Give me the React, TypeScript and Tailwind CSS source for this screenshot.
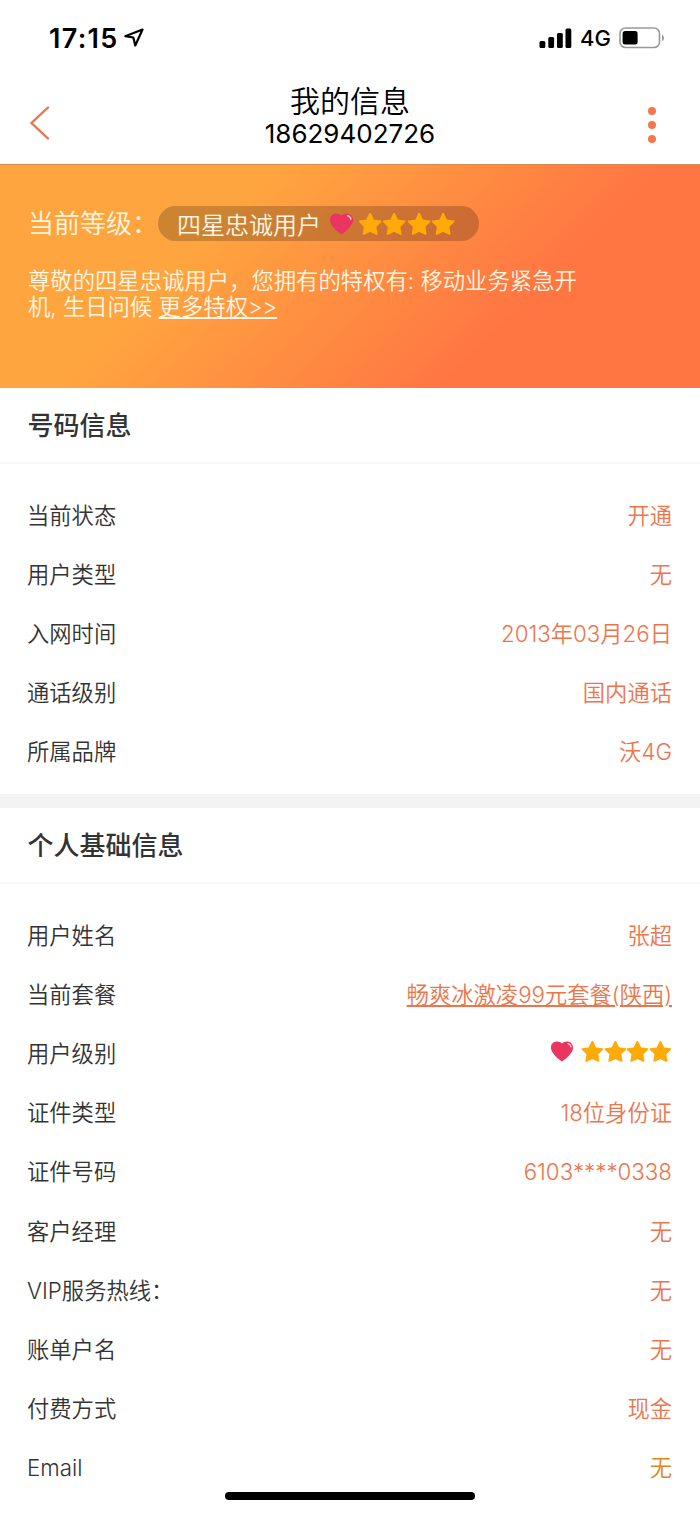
import { clsx } from "clsx";

type Row = {
  label: string;
  value?: string;
  link?: boolean;
  rating?: boolean;
  amber?: boolean;
};

const numberInfo: Row[] = [
  { label: "当前状态", value: "开通" },
  { label: "用户类型", value: "无" },
  { label: "入网时间", value: "2013年03月26日" },
  { label: "通话级别", value: "国内通话" },
  { label: "所属品牌", value: "沃4G" },
];

const personalInfo: Row[] = [
  { label: "用户姓名", value: "张超" },
  { label: "当前套餐", value: "畅爽冰激凌99元套餐(陕西)", link: true },
  { label: "用户级别", rating: true },
  { label: "证件类型", value: "18位身份证" },
  { label: "证件号码", value: "6103****0338" },
  { label: "客户经理", value: "无" },
  { label: "VIP服务热线：", value: "无" },
  { label: "账单户名", value: "无" },
  { label: "付费方式", value: "现金" },
  { label: "Email", value: "无", amber: true },
];

function Heart({ className }: { className?: string }) {
  return (
    <svg viewBox="0 0 24 22" className={className} aria-hidden="true">
      <path
        d="M12 21.5C11 21 1 14 .4 7.6C.1 3.4 3 .5 6.5 .5C9 .5 11 1.2 12 2.6C13 1.2 15 .5 17.5 .5C21 .5 23.9 3.4 23.6 7.6C23 14 13 21 12 21.5Z"
        fill="#ea3560"
      />
      <path d="M18.2 2.8C20 3.2 21.2 4.4 21.4 6.2" fill="none" stroke="#ffc5d2" strokeWidth="1.5" strokeLinecap="round" />
    </svg>
  );
}

function Star({ className }: { className?: string }) {
  return (
    <svg viewBox="0 0 24 24" className={className} aria-hidden="true">
      <path
        d="M12 1.7L15.2 8.3L22.5 9.4L17.3 14.6L18.5 22L12 19L5.5 22L6.7 14.6L1.5 9.4L8.8 8.3Z"
        fill="#ffaa08"
        stroke="#ffaa08"
        strokeWidth="1.8"
        strokeLinejoin="round"
      />
    </svg>
  );
}

function StatusBar() {
  return (
    <div className="flex h-[76px] items-center justify-between pl-[49px] pr-[36px]">
      <div className="flex items-center gap-[5px]">
        <span className="text-[27px] font-semibold leading-none tracking-[1.3px]">17:15</span>
        <svg width="20" height="20" viewBox="0 0 20 20" fill="none" stroke="#000" strokeWidth="2.2" strokeLinejoin="round" aria-hidden="true">
          <path d="M18.5 1.5L1.3 8.2L9.3 9.5L11.3 17.5Z" />
        </svg>
      </div>
      <div className="flex items-center">
        <svg width="33" height="21" viewBox="0 0 33 21" aria-hidden="true">
          <rect x="0.5" y="13" width="5.8" height="7" rx="1.5" />
          <rect x="9.3" y="9" width="5.8" height="11" rx="1.5" />
          <rect x="18" y="5" width="5.8" height="15" rx="1.5" />
          <rect x="26.5" y="0.5" width="5.8" height="19.5" rx="1.5" />
        </svg>
        <span className="ml-2 text-[22px] font-medium leading-none">4G</span>
        <svg className="ml-2" width="45" height="22" viewBox="0 0 45 22" aria-hidden="true">
          <rect x="1" y="1" width="39.5" height="19.5" rx="5.5" fill="#fff" stroke="#999" strokeWidth="1.6" />
          <rect x="3.6" y="4" width="15" height="13.5" rx="2.5" />
          <path d="M43 7.5Q45 8.5 45 11Q45 13.5 43 14.5Z" fill="#999" />
        </svg>
      </div>
    </div>
  );
}

function Header() {
  return (
    <header className="flex h-[88px] items-center justify-between pl-[30px] pr-[44px]">
      <svg className="mt-[6px]" width="20" height="34" viewBox="0 0 20 34" fill="none" stroke="#ee7350" strokeWidth="2.4" strokeLinecap="round" aria-hidden="true">
        <path d="M18 1.5L1.5 17L18 32.5" />
      </svg>
      <div className="mb-[6px] ml-[2px] flex flex-col items-center">
        <h1 className="text-[30px] font-[350] leading-[34px]">我的信息</h1>
        <p className="text-[26px] font-[380] leading-[32px]">18629402726</p>
      </div>
      <div className="mt-[10px] flex flex-col gap-[6px]">
        <span className="size-2 rounded-full bg-[#f4774f]" />
        <span className="size-2 rounded-full bg-[#f4774f]" />
        <span className="size-2 rounded-full bg-[#f4774f]" />
      </div>
    </header>
  );
}

function LevelBanner() {
  return (
    <section className="h-[224px] border-t border-[#d98a50] bg-[linear-gradient(135deg,#ffa53f_30%,#ff7643_72%)] px-7 pt-[41px] text-[#fff6e3]">
      <div className="flex h-[35px] items-center">
        <span className="w-[130px] whitespace-nowrap text-[26px] font-[350] leading-none">当前等级：</span>
        <div className="flex h-[35px] w-[321px] items-center rounded-full bg-black/20 pl-[19px]">
          <span className="whitespace-nowrap pt-[4px] text-[24px] font-[350] leading-none">四星忠诚用户</span>
          <Heart className="ml-2 h-[22px] w-[25px]" />
          <div className="ml-[4px] flex">
            {[0, 1, 2, 3].map((i) => (
              <Star key={i} className="h-6 w-[24.3px]" />
            ))}
          </div>
        </div>
      </div>
      <p className="mt-[27px] whitespace-nowrap text-[22.35px] font-[350] leading-[26px]">
        尊敬的四星忠诚用户，您拥有的特权有: 移动业务紧急开
        <br />
        机, 生日问候{" "}
        <a className="underline decoration-[1.5px] underline-offset-2">更多特权&gt;&gt;</a>
      </p>
    </section>
  );
}

function SectionTitle({ title }: { title: string }) {
  return (
    <h2 className="flex h-[76px] items-center border-b-2 border-[#f7f7f7] px-[27.5px] text-[26px] font-medium text-[#333]">
      {title}
    </h2>
  );
}

function InfoRow({ row }: { row: Row }) {
  return (
    <div className="flex h-[59.15px] items-center justify-between pl-[27px] pr-7 text-[22.3px] font-[350]">
      <span className="text-[#333]">{row.label}</span>
      {row.rating ? (
        <span className="flex items-center pb-[5px]">
          <Heart className="mr-[7px] h-[21px] w-6" />
          {[0, 1, 2, 3].map((i) => (
            <Star key={i} className="h-[23px] w-[22.8px]" />
          ))}
        </span>
      ) : (
        <span
          className={clsx(
            row.amber ? "text-[#e0851a]" : "text-[#ec754c]",
            row.link && "underline decoration-[1.5px] underline-offset-2"
          )}
        >
          {row.value}
        </span>
      )}
    </div>
  );
}

export default function App() {
  return (
    <div className="relative h-[1514px] w-[700px] overflow-hidden bg-white font-['Inter','Noto_Sans_CJK_SC',sans-serif] text-black">
      <StatusBar />
      <Header />
      <LevelBanner />

      {/* 号码信息 */}
      <SectionTitle title="号码信息" />
      <div className="h-[330px] pt-[22px]">
        {numberInfo.map((row) => (
          <InfoRow key={row.label} row={row} />
        ))}
      </div>

      <div className="h-[14px] bg-[#f3f3f3]" />

      {/* 个人基础信息 */}
      <SectionTitle title="个人基础信息" />
      <div className="pt-[22px]">
        {personalInfo.map((row) => (
          <InfoRow key={row.label} row={row} />
        ))}
      </div>

      {/* Home indicator */}
      <div className="absolute bottom-[14px] left-[225px] h-2 w-[250px] rounded-full bg-black" />
    </div>
  );
}
